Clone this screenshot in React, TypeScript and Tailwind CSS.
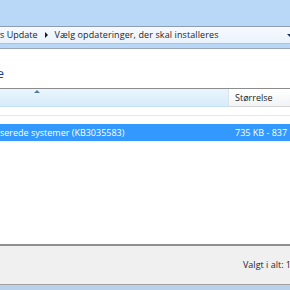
export default function App() {
  return (
    <div className="w-[290px] h-[290px] overflow-hidden flex flex-col bg-white text-[9px] text-[#1e1e1e]" style={{ fontFamily: '"Open Sans", "Noto Sans", sans-serif' }}>
      {/* window frame top */}
      <div className="h-[26px] shrink-0 bg-[#b9d7f7]" />

      {/* address bar */}
      <div className="h-[18px] shrink-0 flex items-center border-t border-[#8e9db0] bg-gradient-to-b from-[#f7fafe] to-[#eaf2fb] border-b border-b-[#a9c4e2]">
        <div className="w-0 flex justify-end whitespace-nowrap">Window</div>
        <span className="whitespace-nowrap">s Update</span>
        <span className="ml-[8px] mr-[6px] w-0 h-0 border-y-[3px] border-y-transparent border-l-[3px] border-l-[#1a1a1a]" />
        <span className="whitespace-nowrap tracking-[0.1px]">Vælg opdateringer, der skal installeres</span>
        <div className="flex-1" />
        <span className="mr-[-3px] w-0 h-0 border-x-[3px] border-x-transparent border-t-[3px] border-t-[#1c2f5a]" />
      </div>
      <div className="h-[4px] shrink-0 bg-[#b9d7f7]" />
      <div className="h-px shrink-0 bg-[#9aa6b4]" />

      {/* content */}
      <div className="flex-1 flex flex-col">
        <div className="h-[18px] shrink-0" />
        <div className="flex text-[13px] leading-none text-[#1c3f9a]">
          <div className="w-[4px] flex justify-end whitespace-nowrap">Vælg de opdateringer, du vil installere</div>
        </div>
        <div className="h-[8px] shrink-0" />

        {/* list header */}
        <div className="h-[19px] shrink-0 flex border-t border-[#8c8c8c]">
          <div className="w-[228px] relative bg-gradient-to-b from-[#eaf6fd] to-[#d5ecf9] border-b border-[#c5e2f4]">
            <span className="absolute left-[34px] top-[1px] w-0 h-0 border-x-[3px] border-x-transparent border-b-[3px] border-b-[#4f7ca8]" />
          </div>
          <div className="w-px bg-[#dce3ea]" />
          <div className="flex-1 flex items-center pl-[6px] bg-gradient-to-b from-[#ffffff] to-[#f2f3f5] border-b border-[#d5d5d5]">
            Størrelse
          </div>
        </div>

        <div className="h-[8px] shrink-0" />
        <div className="h-px shrink-0 bg-[#e8e8e8]" />
        <div className="h-[8px] shrink-0" />

        {/* selected row */}
        <div className="h-[17px] shrink-0 flex items-center bg-[#3399ff] text-white">
          <div className="w-0 flex justify-end whitespace-nowrap">Sikkerhedsopdatering til Windows 7 til x64-ba</div>
          <span className="w-[235px] shrink-0 whitespace-nowrap">serede systemer (KB3035583)</span>
          <span className="whitespace-nowrap">735 KB - 837 KB</span>
        </div>
      </div>

      {/* bottom panel */}
      <div className="h-[41px] shrink-0 flex items-center pl-[243px] border-t-2 border-[#8f8f8f] bg-[#f0f0f0] border-b border-b-[#a0a0a0]">
        <span className="whitespace-nowrap text-[#1e1e2e]">Valgt i alt: 1 opdatering</span>
      </div>
      <div className="h-[5px] shrink-0 bg-[#b9d1ea]" />
    </div>
  );
}
